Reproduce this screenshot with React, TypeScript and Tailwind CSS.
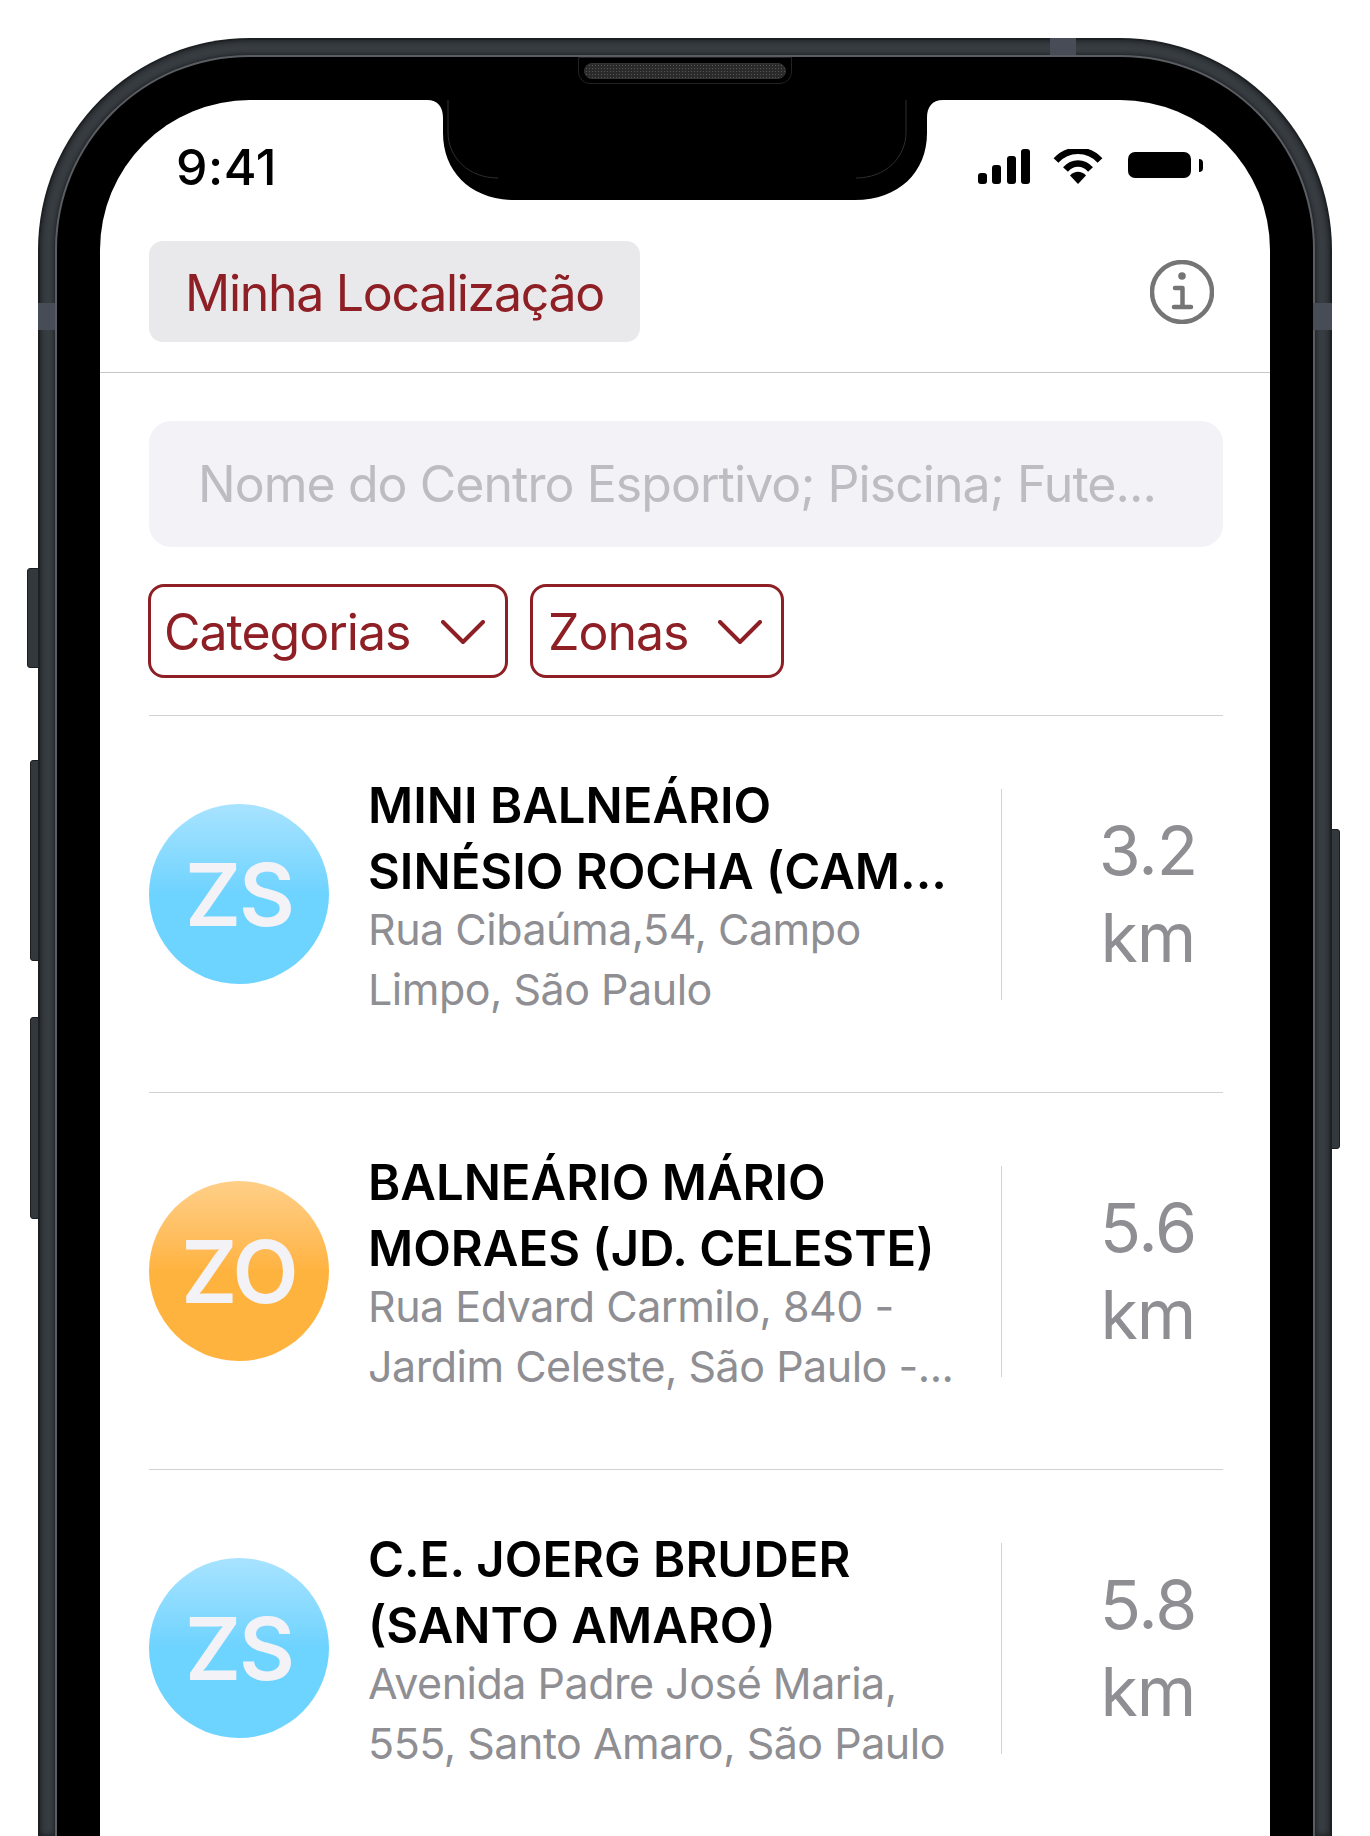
const RED = "text-[#8e1f25]";

type Place = {
  badge: string;
  blue: boolean;
  title: string[];
  address: string[];
  km: string;
};

const places: Place[] = [
  {
    badge: "ZS",
    blue: true,
    title: ["MINI BALNEÁRIO", "SINÉSIO ROCHA (CAM..."],
    address: ["Rua Cibaúma,54, Campo", "Limpo, São Paulo"],
    km: "3.2",
  },
  {
    badge: "ZO",
    blue: false,
    title: ["BALNEÁRIO MÁRIO", "MORAES (JD. CELESTE)"],
    address: ["Rua Edvard Carmilo, 840 -", "Jardim Celeste, São Paulo -..."],
    km: "5.6",
  },
  {
    badge: "ZS",
    blue: true,
    title: ["C.E. JOERG BRUDER", "(SANTO AMARO)"],
    address: ["Avenida Padre José Maria,", "555, Santo Amaro, São Paulo"],
    km: "5.8",
  },
];

const Notch = () => (
  <svg
    className="absolute left-[327px] top-0 overflow-visible"
    width="516"
    height="100"
    viewBox="0 0 516 100"
  >
    <path
      d="M0 0H516C505 0 500 7 500 18V33C500 72 472 100 428 100H88C44 100 16 72 16 33V18C16 7 11 0 0 0Z"
      fill="#000"
    />
    <path
      d="M21-9V32C21 58 42 78 71 78M479-9V32C479 58 458 78 429 78"
      fill="none"
      stroke="#2e2e2e"
      strokeWidth="1"
    />
  </svg>
);

const StatusIcons = () => (
  <div className="flex items-start mt-[7px]">
    <svg width="52" height="35" viewBox="0 0 52 35" fill="#000">
      <rect x="0" y="24" width="9" height="11" rx="3" />
      <rect x="14" y="16" width="9" height="19" rx="3" />
      <rect x="29" y="7" width="9" height="28" rx="3" />
      <rect x="43" y="0" width="9" height="35" rx="3" />
    </svg>
    <svg className="ml-[23px]" width="50" height="35" viewBox="0 0 50 35">
      <path d="M3 11.5C15-1.5 35-1.5 47 11.5" fill="none" stroke="#000" strokeWidth="6.5" />
      <path d="M12.5 20.5C19.5 12.5 30.5 12.5 37.5 20.5" fill="none" stroke="#000" strokeWidth="6.5" />
      <path d="M25 35L17 26.5C21.5 21.5 28.5 21.5 33 26.5Z" fill="#000" />
    </svg>
    <div className="ml-[25px] mt-[3px] flex items-center">
      <div className="w-[63px] h-[26px] bg-black rounded-[7px]" />
      <div className="ml-[8px] w-[4px] h-[13px] bg-black rounded-r-full" />
    </div>
  </div>
);

const InfoIcon = () => (
  <svg width="64" height="64" viewBox="0 0 64 64" fill="none" stroke="#757575" strokeWidth="4.5">
    <circle cx="32" cy="32" r="30" />
    <circle cx="32" cy="16" r="3.8" fill="#757575" stroke="none" />
    <path d="M25 28H32.5V47M24 47H41" strokeLinecap="round" strokeLinejoin="round" />
  </svg>
);

const Chevron = () => (
  <svg width="44" height="25" viewBox="0 0 44 25" fill="none" stroke="#8e1f25" strokeWidth="4">
    <path d="M2 2L22 22L42 2" strokeLinecap="round" strokeLinejoin="round" />
  </svg>
);

const Row = ({ place }: { place: Place }) => (
  <div className="h-[377px] pb-[20px] flex items-center border-t border-[#d1d1d6]">
    <div
      className={`w-[180px] h-[180px] shrink-0 rounded-full flex items-center justify-center pt-[2px] text-[86px] font-semibold text-[#f2f2f7] tracking-[-2px] ${
        place.blue
          ? "bg-gradient-to-b from-[#a8e3ff] to-[#6dd3ff] to-50%"
          : "bg-gradient-to-b from-[#ffcf87] to-[#ffb33f] to-50%"
      }`}
    >
      {place.badge}
    </div>
    <div className="ml-[39px] w-[633px] shrink-0 pt-[4px]">
      {place.title.map((line) => (
        <div key={line} className="text-[49px] leading-[66px] font-semibold text-black whitespace-nowrap">
          {line}
        </div>
      ))}
      <div className="-mt-[6px]">
        {place.address.map((line) => (
          <div key={line} className="text-[43px] leading-[60px] text-[#8e8e93] tracking-[-0.5px] whitespace-nowrap">
            {line}
          </div>
        ))}
      </div>
    </div>
    <div className="h-[211px] flex-1 border-l border-[#d1d1d6] flex flex-col items-center justify-center pl-[71px] text-[68px] leading-[87px] text-[#8e8e93] tracking-[-1px]">
      <span>{place.km}</span>
      <span>km</span>
    </div>
  </div>
);

const SideButton = ({ className }: { className: string }) => (
  <div className={`absolute bg-[#33383d] border border-[#1b1e21] ${className}`} />
);

export default function App() {
  return (
    <div className="w-[1370px] h-[1836px] overflow-hidden bg-white pt-[38px] pl-[38px] font-['Inter',sans-serif]">
      <div className="relative w-[1294px] h-[1798px]">
        <SideButton className="left-[-11px] top-[530px] w-[12px] h-[100px] rounded-l-[3px]" />
        <SideButton className="left-[-8px] top-[722px] w-[9px] h-[201px] rounded-l-[3px]" />
        <SideButton className="left-[-8px] top-[979px] w-[9px] h-[202px] rounded-l-[3px]" />
        <SideButton className="right-[-8px] top-[791px] w-[9px] h-[320px] rounded-r-[3px]" />

        <div className="relative h-full rounded-t-[212px] bg-[#383d42] border-t-2 border-x-2 border-[#1d2023] pt-[15px] px-[15px] shadow-[inset_0_0_6px_#14171a]">
          <div className="absolute left-[-2px] top-[263px] w-[17px] h-[27px] bg-[#474c57]" />
          <div className="absolute right-[-2px] top-[263px] w-[19px] h-[27px] bg-[#474c57]" />
          <div className="absolute left-[1010px] top-[-2px] w-[26px] h-[17px] bg-[#474c57]" />

          <div className="h-full rounded-t-[194px] bg-black border-t-2 border-x-2 border-[#5a5e62] pt-[43px] px-[43px] shadow-[0_0_5px_#14171a]">
            <div className="relative h-full bg-white rounded-t-[150px] overflow-hidden">
              <Notch />

              <div className="flex justify-between items-start pt-[42px] pl-[76px] pr-[67px] h-[141px]">
                <span className="text-[50px] leading-[50px] font-medium text-black tracking-[0.5px]">9:41</span>
                <StatusIcons />
              </div>

              <div className="h-[132px] pl-[49px] pr-[56px] flex justify-between items-start border-b border-[#c6c6c8]">
                <div className={`w-[491px] h-[101px] pt-[3px] bg-[#e9e9eb] rounded-[14px] flex items-center justify-center text-[50px] ${RED} tracking-[-1.3px]`}>
                  Minha Localização
                </div>
                <div className="mt-[19px]">
                  <InfoIcon />
                </div>
              </div>

              <div className="pl-[49px] pr-[47px]">
                <div className="mt-[48px] h-[126px] pt-[1px] bg-[#f2f2f7] rounded-[22px] flex items-center pl-[49px] text-[50px] text-[#bcbcc2] tracking-[-0.95px] whitespace-nowrap">
                  Nome do Centro Esportivo; Piscina; Fute...
                </div>

                <div className="mt-[37px] -ml-[1px] flex gap-[22px]">
                  <div className={`w-[360px] h-[94px] pt-[2px] border-[3px] border-[#8e1f25] rounded-[16px] flex items-center pl-[13px] text-[50px] ${RED} tracking-[-1px]`}>
                    <span>Categorias</span>
                    <span className="ml-[31px]">
                      <Chevron />
                    </span>
                  </div>
                  <div className={`w-[254px] h-[94px] pt-[2px] border-[3px] border-[#8e1f25] rounded-[16px] flex items-center pl-[15px] text-[50px] ${RED} tracking-[-1px]`}>
                    <span>Zonas</span>
                    <span className="ml-[30px]">
                      <Chevron />
                    </span>
                  </div>
                </div>

                <div className="mt-[37px]">
                  {places.map((p) => (
                    <Row key={p.km} place={p} />
                  ))}
                </div>
              </div>
            </div>
          </div>

          <div className="absolute left-[538px] top-[17px] w-[214px] h-[27px] rounded-b-[12px] border border-[#222] bg-black flex items-center justify-center">
            <div className="w-[202px] h-[16px] rounded-full border border-[#333] bg-[#2a2a2a] bg-[radial-gradient(#555_1px,transparent_1px)] bg-[length:3px_3px]" />
          </div>
        </div>
      </div>
    </div>
  );
}
